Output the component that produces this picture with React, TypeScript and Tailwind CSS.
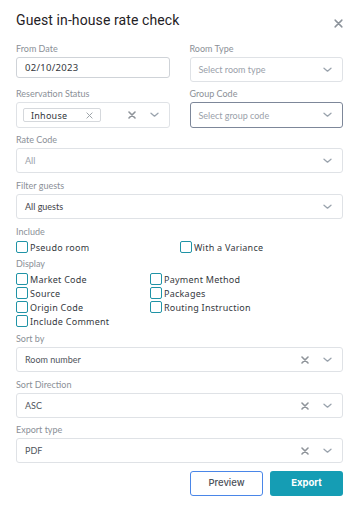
import React from 'react';

const labelFont = { fontFamily: 'Lato, "Noto Sans", sans-serif' };
const bodyFont = { fontFamily: '"Noto Sans", "Open Sans", sans-serif' };

const Chevron = () => (
  <svg width="9" height="6" viewBox="0 0 9 6" fill="none" className="shrink-0">
    <path d="M1 1.2l3.5 3L8 1.2" stroke="#9aa3ad" strokeWidth="1.3" strokeLinecap="round" strokeLinejoin="round" />
  </svg>
);

const Cross = ({ size = 8, color = '#8f949a', width = 1.6 }: { size?: number; color?: string; width?: number }) => (
  <svg width={size} height={size} viewBox="0 0 8 8" fill="none" className="shrink-0">
    <path d="M1 1l6 6M7 1L1 7" stroke={color} strokeWidth={width} strokeLinecap="round" />
  </svg>
);

const Label = ({ children }: { children: React.ReactNode }) => (
  <div className="text-[9px] leading-[12px] mb-[2px] text-[#8b9097]" style={labelFont}>
    {children}
  </div>
);

interface SelectProps {
  value: string;
  placeholder?: boolean;
  clearable?: boolean;
  dark?: boolean;
}

const Select = ({ value, placeholder, clearable, dark }: SelectProps) => (
  <div className="flex items-center h-[25px] rounded-[3px] border border-[#dfe2e6] bg-white pl-[8px] pr-[10px]">
    <span
      className={`flex-1 text-[9px] leading-none ${
        placeholder ? 'text-[#9aa1aa]' : dark ? 'text-[#3f4349]' : 'text-[#50555c]'
      }`}
      style={labelFont}
    >
      {value}
    </span>
    {clearable && (
      <span className="mr-[14px]">
        <Cross />
      </span>
    )}
    <Chevron />
  </div>
);

const Check = ({ label }: { label: string }) => (
  <label className="flex items-center h-[14px] gap-[2px]">
    <span className="w-[12px] h-[12px] rounded-[2px] border border-[#1f93a6] bg-white shrink-0" />
    <span className="text-[9px] leading-none text-[#35393e] tracking-[0.25px]" style={bodyFont}>
      {label}
    </span>
  </label>
);

export default function App() {
  return (
    <div className="w-[362px] h-[515px] bg-white pl-4 pr-[19px] pt-[10px]">
      <div className="flex items-start justify-between h-[20px]">
        <h2
          className="text-[14px] leading-[20px] font-normal text-[#1f2226] tracking-[0.1px]"
          style={{ fontFamily: 'Roboto, "Noto Sans", sans-serif' }}
        >
          Guest in-house rate check
        </h2>
        <button className="mt-[9px]">
          <Cross size={9} color="#8c939b" width={1.3} />
        </button>
      </div>

      <div className="mt-[13px] grid grid-cols-2 gap-x-[20px]">
        <div>
          <Label>From Date</Label>
          <div className="flex items-center h-[21px] rounded-[3px] border border-[#cfd3d8] px-[8px]">
            <span className="text-[9.5px] leading-none text-[#33373c] tracking-[0.3px]" style={bodyFont}>
              02/10/2023
            </span>
          </div>
        </div>
        <div>
          <Label>Room Type</Label>
          <Select value="Select room type" placeholder />
        </div>
        <div className="mt-[6px]">
          <Label>Reservation Status</Label>
          <div className="flex items-center h-[26px] rounded-[3px] border border-[#dfe2e6] pl-[6px] pr-[10px]">
            <div className="flex items-center h-[14px] w-[78px] rounded-[2px] border border-[#d5d8dc] pl-[7px] pr-[7px]">
              <span className="flex-1 text-[9px] leading-none text-[#33373c] tracking-[0.25px]" style={bodyFont}>
                Inhouse
              </span>
              <Cross size={7} color="#9aa0a6" width={1.1} />
            </div>
            <div className="flex-1" />
            <span className="mr-[14px]">
              <Cross />
            </span>
            <Chevron />
          </div>
        </div>
        <div className="mt-[6px]">
          <Label>Group Code</Label>
          <div className="flex items-center h-[26px] rounded-[3px] border border-[#7d8799] bg-white pl-[8px] pr-[10px]">
            <span className="flex-1 text-[9px] leading-none text-[#9aa1aa]" style={labelFont}>
              Select group code
            </span>
            <Chevron />
          </div>
        </div>
      </div>

      <div className="mt-[6px]">
        <Label>Rate Code</Label>
        <Select value="All" placeholder />
      </div>
      <div className="mt-[7px]">
        <Label>Filter guests</Label>
        <Select value="All guests" dark />
      </div>

      <div className="mt-[7px]">
        <Label>Include</Label>
        <div className="grid grid-cols-[164px_1fr]">
          <Check label="Pseudo room" />
          <Check label="With a Variance" />
        </div>
      </div>

      <div className="mt-[4px]">
        <Label>Display</Label>
        <div className="grid grid-cols-[134px_1fr]">
          <Check label="Market Code" />
          <Check label="Payment Method" />
          <Check label="Source" />
          <Check label="Packages" />
          <Check label="Origin Code" />
          <Check label="Routing Instruction" />
          <Check label="Include Comment" />
        </div>
      </div>

      <div className="mt-[5px]">
        <Label>Sort by</Label>
        <Select value="Room number" clearable />
      </div>
      <div className="mt-[7px]">
        <Label>Sort Direction</Label>
        <Select value="ASC" clearable />
      </div>
      <div className="mt-[6px]">
        <Label>Export type</Label>
        <Select value="PDF" clearable />
      </div>

      <div className="mt-[8px] flex justify-end gap-[7px]">
        <button
          className="w-[73px] h-[25px] rounded-[3px] border border-[#4a86e8] bg-white text-[9.5px] font-medium text-[#4b5058]"
          style={{ fontFamily: 'Inter, sans-serif' }}
        >
          Preview
        </button>
        <button
          className="w-[73px] h-[25px] rounded-[3px] bg-[#159db4] text-[9.5px] font-bold text-white"
          style={{ fontFamily: 'Inter, sans-serif' }}
        >
          Export
        </button>
      </div>
    </div>
  );
}
